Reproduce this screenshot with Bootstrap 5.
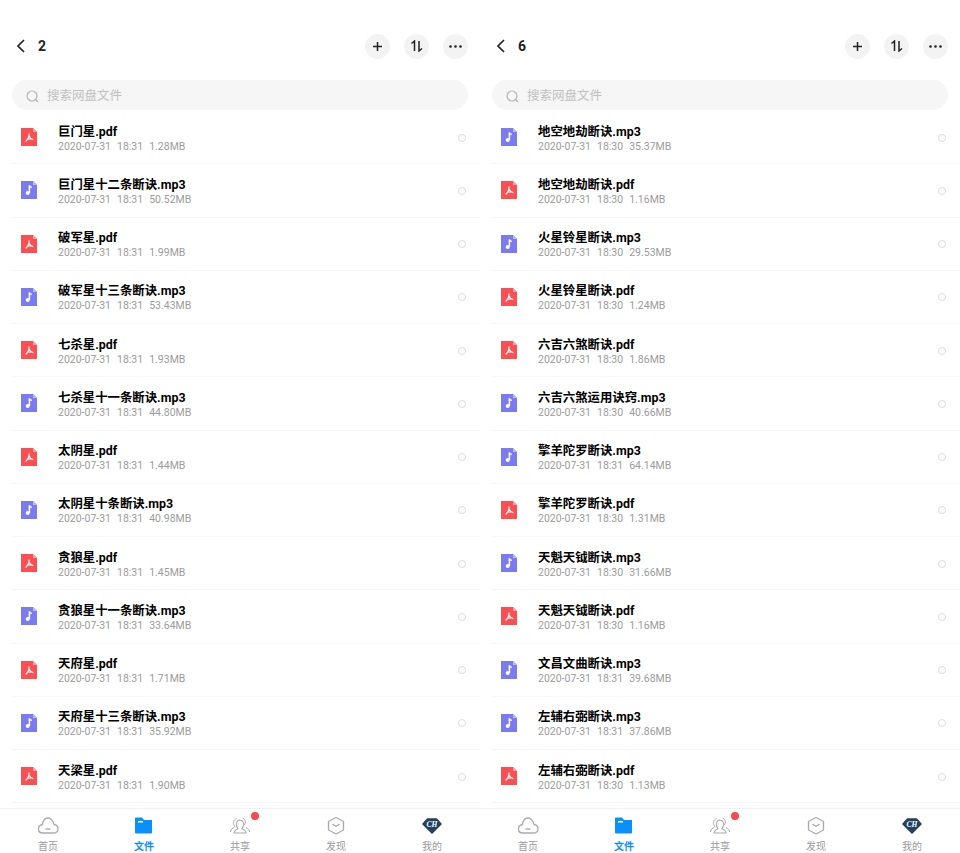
<!DOCTYPE html>
<html lang="zh">
<head>
  <meta charset="UTF-8">
  <meta name="viewport" content="width=device-width, initial-scale=1.0">
  <title>网盘文件</title>
  <link rel="stylesheet" href="https://cdn.jsdelivr.net/npm/bootstrap@5.3.2/dist/css/bootstrap.min.css"/>
  <style>
    html, body { height: 853px; overflow: hidden; }
    body { font-family: Roboto, "Noto Sans CJK SC", sans-serif; background: #fff; }
    .pane { width: 480px; height: 853px; }
    .top-bar { height: 80px; padding: 12px 12px 0 16px; flex: none; }
    .back-ico { width: 10px; height: 14px; margin-right: 12px; }
    .folder-name { font-size: 14px; font-weight: 700; color: #222; }
    .round-btn { width: 25px; height: 25px; border-radius: 50%; background: #f3f3f3; }
    .btn-gap { gap: 14px; }
    .search-box { height: 30px; margin: 0 12px; border-radius: 15px; background: #f6f6f6; padding: 2px 0 0 14px; color: #c0c0c0; font-size: 12.5px; gap: 8px; flex: none; }
    .file-list { overflow: hidden; min-height: 0; padding-left: 12px; margin-top: 1px; }
    .file-row { height: 53.25px; flex: none; border-bottom: 1px solid #f6f6f6; padding: 0 14px 0 9px; }
    .file-ico { width: 16px; height: 18px; margin-right: 21px; flex: none; }
    .file-text { padding-top: 3px; }
    .file-title { font-size: 12.4px; line-height: 15px; font-weight: 700; color: #000; white-space: nowrap; }
    .file-sub { font-size: 10.5px; line-height: 14px; color: #9b9b9b; margin-top: 1px; white-space: nowrap; }
    .file-sub span { margin-right: 6px; }
    .pick { width: 8px; height: 8px; border-radius: 50%; border: 1px solid #dcdcdc; flex: none; margin: 1px 0 0 auto; }
    .tab-bar { height: 45px; flex: none; border-top: 1px solid #f2f2f2; }
    .tab-item { width: 96px; font-size: 10px; line-height: 13px; color: #9a9a9a; padding-top: 7px; }
    .tab-item svg { height: 20px; width: 22px; margin-bottom: 4px; }
    .tab-on { color: #0a8fff; font-weight: 700; }
    .red-dot { position: absolute; width: 8px; height: 8px; border-radius: 50%; background: #f54a4f; top: 3px; left: 59px; }
    .vip-tag { font-family: "Liberation Serif", serif; font-size: 7.5px; font-style: italic; font-weight: 700; fill: #fff; }
  </style>
  <script>
    const pdfIco = `<svg class="file-ico" viewBox="0 0 16 18"><path d="M0 0h12l4 4v14H0z" fill="#fb5053"/><path d="M12 0l4 4h-4z" fill="#fda0a2"/><path d="M8 5.500c.2 2.800-1 5.800-3.300 8M8 8c.6 1.500 2 3 4.300 3.700M6.300 11.300c1.800-.5 3.500-.7 5-.5" fill="none" stroke="#fff" stroke-width="1.100"/></svg>`
    const mp3Ico = `<svg class="file-ico" viewBox="0 0 16 18"><path d="M0 0h12l4 4v14H0z" fill="#7b7bf0"/><path d="M12 0l4 4h-4z" fill="#b9b9f7"/><path d="M8.400 4.500v7.300" stroke="#fff" stroke-width="1.500"/><path d="M8.200 4.500c.4 1.300 1.400 1.700 2.600 2" stroke="#fff" stroke-width="1.300" fill="none"/><circle cx="6.700" cy="12" r="2" fill="#fff"/></svg>`

    const leftFiles = [
      ['巨门星.pdf','18:31','1.28MB'],['巨门星十二条断诀.mp3','18:31','50.52MB'],
      ['破军星.pdf','18:31','1.99MB'],['破军星十三条断诀.mp3','18:31','53.43MB'],
      ['七杀星.pdf','18:31','1.93MB'],['七杀星十一条断诀.mp3','18:31','44.80MB'],
      ['太阴星.pdf','18:31','1.44MB'],['太阴星十条断诀.mp3','18:31','40.98MB'],
      ['贪狼星.pdf','18:31','1.45MB'],['贪狼星十一条断诀.mp3','18:31','33.64MB'],
      ['天府星.pdf','18:31','1.71MB'],['天府星十三条断诀.mp3','18:31','35.92MB'],
      ['天梁星.pdf','18:31','1.90MB']
    ]
    const rightFiles = [
      ['地空地劫断诀.mp3','18:30','35.37MB'],['地空地劫断诀.pdf','18:30','1.16MB'],
      ['火星铃星断诀.mp3','18:30','29.53MB'],['火星铃星断诀.pdf','18:30','1.24MB'],
      ['六吉六煞断诀.pdf','18:30','1.86MB'],['六吉六煞运用诀窍.mp3','18:30','40.66MB'],
      ['擎羊陀罗断诀.mp3','18:31','64.14MB'],['擎羊陀罗断诀.pdf','18:30','1.31MB'],
      ['天魁天钺断诀.mp3','18:30','31.66MB'],['天魁天钺断诀.pdf','18:30','1.16MB'],
      ['文昌文曲断诀.mp3','18:31','39.68MB'],['左辅右弼断诀.mp3','18:31','37.86MB'],
      ['左辅右弼断诀.pdf','18:30','1.13MB']
    ]

    function paneHtml(name, files){
      let rows = ''
      for(let i=0; i<files.length; i++){
        let f = files[i]
        rows += `
          <div class="file-row d-flex align-items-center">
            ${f[0].endsWith('pdf') ? pdfIco : mp3Ico}
            <div class="file-text flex-grow-1">
              <div class="file-title">${f[0]}</div>
              <div class="file-sub"><span>2020-07-31</span><span>${f[1]}</span>${f[2]}</div>
            </div>
            <span class="pick"></span>
          </div>`
      }
      return `
        <div class="pane d-flex flex-column">
          <div class="top-bar d-flex align-items-center">
            <svg class="back-ico" viewBox="0 0 10 14"><path d="M8 1L2 7l6 6" fill="none" stroke="#222" stroke-width="1.700"/></svg>
            <span class="folder-name flex-grow-1">${name}</span>
            <div class="d-flex btn-gap">
              <span class="round-btn d-flex align-items-center justify-content-center"><svg width="11" height="11" viewBox="0 0 11 11"><path d="M5.500 1v9M1 5.500h9" stroke="#222" stroke-width="1.500"/></svg></span>
              <span class="round-btn d-flex align-items-center justify-content-center"><svg width="13" height="12" viewBox="0 0 13 12"><path d="M1.500 3.500L4.500 1v10M9 1v10l3-2.500" fill="none" stroke="#222" stroke-width="1.500"/></svg></span>
              <span class="round-btn d-flex align-items-center justify-content-center"><svg width="13" height="3" viewBox="0 0 13 3"><circle cx="1.500" cy="1.500" r="1.300" fill="#222"/><circle cx="6.500" cy="1.500" r="1.300" fill="#222"/><circle cx="11.500" cy="1.500" r="1.300" fill="#222"/></svg></span>
            </div>
          </div>
          <div class="search-box d-flex align-items-center">
            <svg width="13" height="13" viewBox="0 0 13 13"><circle cx="6" cy="6" r="5" fill="none" stroke="#b5b5b5" stroke-width="1.200"/><path d="M9.500 9.500l2.500 2.500" stroke="#b5b5b5" stroke-width="1.200"/></svg>
            <span>搜索网盘文件</span>
          </div>
          <div class="file-list flex-grow-1 d-flex flex-column">${rows}</div>
          <div class="tab-bar d-flex">
            <div class="tab-item d-flex flex-column align-items-center">
              <svg viewBox="0 0 22 20"><path d="M6 17h10c7 0 6-8 1-8.500C16 3 12 2 11 2 8 2 6 4.500 5.500 8.500 0 9.500 0 17 6 17z" fill="none" stroke="#aaa" stroke-width="1.300"/><path d="M8.500 13h5" stroke="#aaa" stroke-width="1.300"/></svg>
              <span>首页</span>
            </div>
            <div class="tab-item tab-on d-flex flex-column align-items-center">
              <svg viewBox="0 0 22 20"><path d="M3 1.500h6l2 2.500h8v12.500a1 1 0 0 1-1 1H3a1 1 0 0 1-1-1v-14a1 1 0 0 1 1-1z" fill="#0a8fff"/><rect x="5" y="5" width="5" height="1.500" fill="#fff"/></svg>
              <span>文件</span>
            </div>
            <div class="tab-item d-flex flex-column align-items-center position-relative">
              <svg viewBox="0 0 22 20"><path d="M1.500 16c0-3 2-3.500 3.500-4.500 1-1 .5-1.500 0-2.500-1-2-.5-5.500 2.500-6.500M20.500 16c0-3-2-3.500-3.500-4.500M13.500 2c3 1 3.500 4.500 2 7" fill="none" stroke="#aaa" stroke-width="1"/><path d="M5 17c0-3 3-3 4-4.500-2-2-2.500-8.500 2-8.500s4 6.500 2 8.500c1 1.500 4 1.500 4 4.500z" fill="none" stroke="#aaa" stroke-width="1.100"/></svg>
              <span class="red-dot"></span>
              <span>共享</span>
            </div>
            <div class="tab-item d-flex flex-column align-items-center">
              <svg viewBox="0 0 22 20"><path d="M11 1.500l7.500 4v8.500l-7.500 4-7.500-4V5.500z" fill="none" stroke="#aaa" stroke-width="1.300" stroke-linejoin="round"/><path d="M7.500 8l3.500 2.500L14.500 8" fill="none" stroke="#aaa" stroke-width="1.300"/></svg>
              <span>发现</span>
            </div>
            <div class="tab-item d-flex flex-column align-items-center">
              <svg viewBox="0 0 22 20"><path d="M6.500 3h9l4.500 5-9 9-9-9z" fill="#24405f" stroke="#24405f" stroke-width="1.500" stroke-linejoin="round"/><text class="vip-tag" x="11" y="11" text-anchor="middle">CH</text></svg>
              <span>我的</span>
            </div>
          </div>
        </div>`
    }

    window.onload = function(){
      document.getElementById('screens').innerHTML = paneHtml('2', leftFiles) + paneHtml('6', rightFiles)
    }
  </script>
</head>
<body>
  <div class="d-flex" id="screens"></div>
  <script src="https://cdn.jsdelivr.net/npm/bootstrap@5.3.2/dist/js/bootstrap.bundle.min.js"></script>
</body>
</html>
